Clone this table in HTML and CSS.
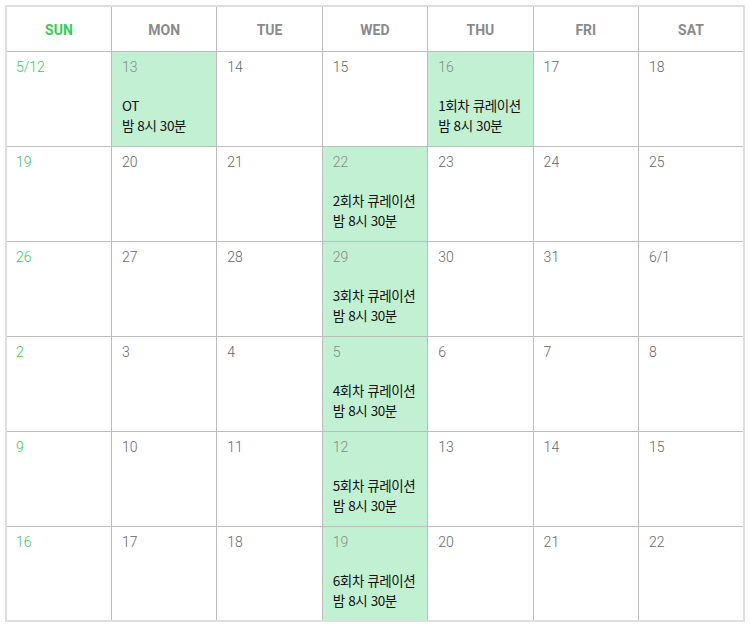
FILE: index.html
```html
<!DOCTYPE html>
<html lang="ko">
<head>
<meta charset="utf-8">
<link rel="stylesheet" href="styles.css">
</head>
<body>
<table class="cal">
  <thead>
    <tr>
      <th class="sun">SUN</th><th>MON</th><th>TUE</th><th>WED</th><th>THU</th><th>FRI</th><th>SAT</th>
    </tr>
  </thead>
  <tbody>
    <tr>
      <td class="sun"><div class="d">5/12</div></td>
      <td class="ev"><div class="d">13</div><div class="t">OT<br>밤 8시 30분</div></td>
      <td><div class="d">14</div></td>
      <td><div class="d">15</div></td>
      <td class="ev"><div class="d">16</div><div class="t">1회차 큐레이션<br>밤 8시 30분</div></td>
      <td><div class="d">17</div></td>
      <td><div class="d">18</div></td>
    </tr>
    <tr>
      <td class="sun"><div class="d">19</div></td>
      <td><div class="d">20</div></td>
      <td><div class="d">21</div></td>
      <td class="ev"><div class="d">22</div><div class="t">2회차 큐레이션<br>밤 8시 30분</div></td>
      <td><div class="d">23</div></td>
      <td><div class="d">24</div></td>
      <td><div class="d">25</div></td>
    </tr>
    <tr>
      <td class="sun"><div class="d">26</div></td>
      <td><div class="d">27</div></td>
      <td><div class="d">28</div></td>
      <td class="ev"><div class="d">29</div><div class="t">3회차 큐레이션<br>밤 8시 30분</div></td>
      <td><div class="d">30</div></td>
      <td><div class="d">31</div></td>
      <td><div class="d">6/1</div></td>
    </tr>
    <tr>
      <td class="sun"><div class="d">2</div></td>
      <td><div class="d">3</div></td>
      <td><div class="d">4</div></td>
      <td class="ev"><div class="d">5</div><div class="t">4회차 큐레이션<br>밤 8시 30분</div></td>
      <td><div class="d">6</div></td>
      <td><div class="d">7</div></td>
      <td><div class="d">8</div></td>
    </tr>
    <tr>
      <td class="sun"><div class="d">9</div></td>
      <td><div class="d">10</div></td>
      <td><div class="d">11</div></td>
      <td class="ev"><div class="d">12</div><div class="t">5회차 큐레이션<br>밤 8시 30분</div></td>
      <td><div class="d">13</div></td>
      <td><div class="d">14</div></td>
      <td><div class="d">15</div></td>
    </tr>
    <tr>
      <td class="sun"><div class="d">16</div></td>
      <td><div class="d">17</div></td>
      <td><div class="d">18</div></td>
      <td class="ev"><div class="d">19</div><div class="t">6회차 큐레이션<br>밤 8시 30분</div></td>
      <td><div class="d">20</div></td>
      <td><div class="d">21</div></td>
      <td><div class="d">22</div></td>
    </tr>
  </tbody>
</table>
</body>
</html>
```
FILE: styles.css
```css
html, body {
  margin: 0;
  padding: 0;
  background: #fff;
}
body {
  padding: 5px 0 0 5px;
  font-family: Roboto, "Noto Sans CJK KR", sans-serif;
}
.cal {
  border-collapse: collapse;
  table-layout: fixed;
  width: 740px;
  border: 2px solid #dedede;
}
.cal th, .cal td {
  border: 1px solid #bdbdbd;
}
.cal th {
  height: 45px;
  padding: 2px 0 0 0;
  font-size: 14px;
  font-weight: 700;
  color: #8a8a8a;
  text-align: center;
  vertical-align: middle;
  box-sizing: border-box;
}
.cal th.sun {
  color: #33cc55;
}
.cal td {
  height: 95px;
  padding: 5px 8px 0 10px;
  vertical-align: top;
  box-sizing: border-box;
}
.cal td.sun {
  padding-left: 9px;
}
.d {
  font-size: 14px;
  line-height: 20px;
  color: #666;
  font-weight: 300;
}
td.sun .d {
  color: #3fc45c;
}
td.ev {
  background: #c2f0d3;
}
td.ev .d {
  color: #888;
}
.t {
  margin-top: 18px;
  font-family: "Noto Sans CJK KR", sans-serif;
  font-size: 13.5px;
  line-height: 20px;
  color: #111;
  letter-spacing: -0.4px;
  white-space: nowrap;
}
```
